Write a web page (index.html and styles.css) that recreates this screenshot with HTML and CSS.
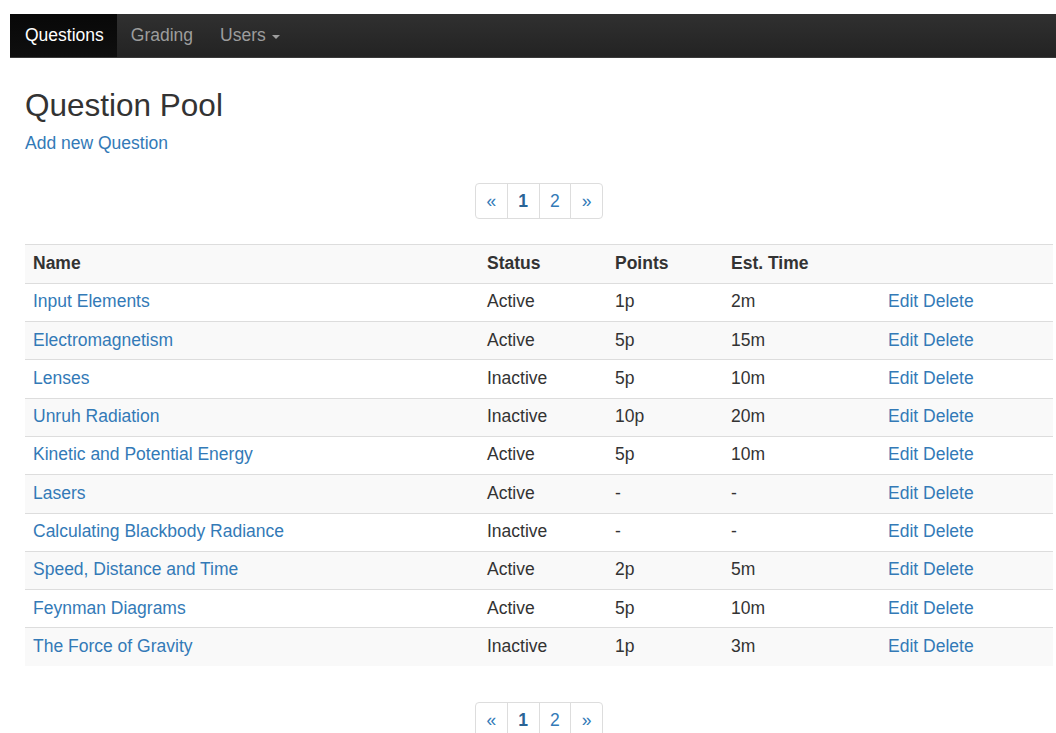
FILE: index.html
```html
<!DOCTYPE html>
<html lang="en">
<head>
<meta charset="utf-8">
<title>Question Pool</title>
<link rel="stylesheet" href="styles.css">
</head>
<body>
<div class="page">
  <nav class="navbar">
    <a class="nav-item active" href="#">Questions</a>
    <a class="nav-item" href="#">Grading</a>
    <a class="nav-item" href="#">Users <span class="caret"></span></a>
  </nav>

  <main class="content">
    <h1 class="title">Question Pool</h1>
    <p class="actions"><a href="#">Add new Question</a></p>

    <ul class="pagination">
      <li><a href="#">&laquo;</a></li>
      <li class="current"><a href="#">1</a></li>
      <li><a href="#">2</a></li>
      <li><a href="#">&raquo;</a></li>
    </ul>

    <table class="questions">
      <colgroup>
        <col class="col-name">
        <col class="col-status">
        <col class="col-points">
        <col class="col-time">
        <col class="col-actions">
      </colgroup>
      <tbody>
        <tr><th>Name</th><th>Status</th><th>Points</th><th>Est. Time</th><th></th></tr>
        <tr><td><a href="#">Input Elements</a></td><td>Active</td><td>1p</td><td>2m</td><td><a href="#">Edit</a> <a href="#">Delete</a></td></tr>
        <tr><td><a href="#">Electromagnetism</a></td><td>Active</td><td>5p</td><td>15m</td><td><a href="#">Edit</a> <a href="#">Delete</a></td></tr>
        <tr><td><a href="#">Lenses</a></td><td>Inactive</td><td>5p</td><td>10m</td><td><a href="#">Edit</a> <a href="#">Delete</a></td></tr>
        <tr><td><a href="#">Unruh Radiation</a></td><td>Inactive</td><td>10p</td><td>20m</td><td><a href="#">Edit</a> <a href="#">Delete</a></td></tr>
        <tr><td><a href="#">Kinetic and Potential Energy</a></td><td>Active</td><td>5p</td><td>10m</td><td><a href="#">Edit</a> <a href="#">Delete</a></td></tr>
        <tr><td><a href="#">Lasers</a></td><td>Active</td><td>-</td><td>-</td><td><a href="#">Edit</a> <a href="#">Delete</a></td></tr>
        <tr><td><a href="#">Calculating Blackbody Radiance</a></td><td>Inactive</td><td>-</td><td>-</td><td><a href="#">Edit</a> <a href="#">Delete</a></td></tr>
        <tr><td><a href="#">Speed, Distance and Time</a></td><td>Active</td><td>2p</td><td>5m</td><td><a href="#">Edit</a> <a href="#">Delete</a></td></tr>
        <tr><td><a href="#">Feynman Diagrams</a></td><td>Active</td><td>5p</td><td>10m</td><td><a href="#">Edit</a> <a href="#">Delete</a></td></tr>
        <tr><td><a href="#">The Force of Gravity</a></td><td>Inactive</td><td>1p</td><td>3m</td><td><a href="#">Edit</a> <a href="#">Delete</a></td></tr>
      </tbody>
    </table>

    <ul class="pagination pagination-bottom">
      <li><a href="#">&laquo;</a></li>
      <li class="current"><a href="#">1</a></li>
      <li><a href="#">2</a></li>
      <li><a href="#">&raquo;</a></li>
    </ul>
  </main>
</div>
</body>
</html>
```

FILE: styles.css
```css
html {
  overflow: hidden;
}

body {
  margin: 0;
  font-family: "Liberation Sans", Arial, Helvetica, sans-serif;
  font-size: 17.5px;
  line-height: 21.3px;
  color: #333;
  background: #fff;
}

a {
  color: #337ab7;
  text-decoration: none;
}

.page {
  width: 1058px;
  margin: 14px 0 0 10px;
}

/* top navigation bar */
.navbar {
  display: flex;
  height: 43px;
  padding-left: 1.5px;
  background: linear-gradient(to bottom, #303030 0%, #232323 100%);
  border-bottom: 1px solid #3a3a3a;
}

.nav-item {
  display: flex;
  align-items: center;
  padding: 0 13.5px;
  font-size: 17.5px;
  color: #9d9d9d;
}

.nav-item.active {
  color: #fff;
  margin-left: -1.5px;
  padding-left: 15px;
  background: linear-gradient(to bottom, #080808 0%, #0f0f0f 100%);
}

.caret {
  display: inline-block;
  width: 0;
  height: 0;
  margin-left: 6px;
  margin-top: 2px;
  border-top: 4px solid;
  border-left: 4px solid transparent;
  border-right: 4px solid transparent;
}

/* main content */
.content {
  padding: 0 15px;
}

.title {
  margin: 30px 0 10px;
  font-size: 31.5px;
  line-height: 34.65px;
  font-weight: normal;
}

.actions {
  margin: 0;
}

/* pager */
.pagination {
  display: flex;
  justify-content: center;
  list-style: none;
  margin: 29.5px 0 0;
  padding: 0;
}

.pagination li a {
  display: block;
  padding: 6px 10.5px;
  line-height: 22px;
  border: 1px solid #ddd;
  margin-left: -1px;
  color: #337ab7;
  background: #fff;
}

.pagination li:first-child a {
  margin-left: 0;
  border-radius: 4px 0 0 4px;
}

.pagination li:last-child a {
  border-radius: 0 4px 4px 0;
}

.pagination li.current a {
  font-weight: bold;
  color: #2a6496;
}

.pagination-bottom {
  margin-top: 36px;
}

/* question table */
.questions {
  width: 1028px;
  margin-top: 25px;
  border-collapse: collapse;
  border-spacing: 0;
}

.col-name { width: 454px; }
.col-status { width: 128px; }
.col-points { width: 116px; }
.col-time { width: 157px; }

.questions th,
.questions td {
  padding: 7.5px 8px 8.5px;
  line-height: 21.3px;
  text-align: left;
  vertical-align: top;
  border-top: 1px solid #ddd;
}

.questions th {
  font-weight: bold;
}

.questions tr:nth-child(odd) {
  background: #f9f9f9;
}
```
